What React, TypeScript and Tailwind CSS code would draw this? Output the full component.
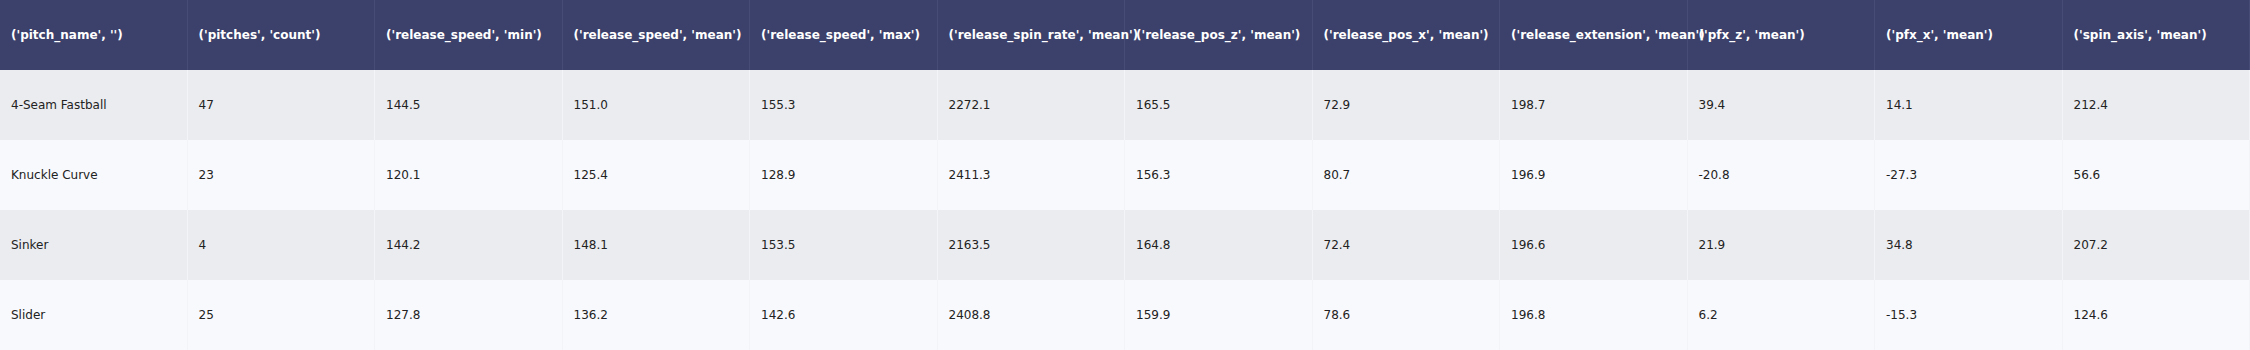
const headers = [
  "('pitch_name', '')",
  "('pitches', 'count')",
  "('release_speed', 'min')",
  "('release_speed', 'mean')",
  "('release_speed', 'max')",
  "('release_spin_rate', 'mean')",
  "('release_pos_z', 'mean')",
  "('release_pos_x', 'mean')",
  "('release_extension', 'mean')",
  "('pfx_z', 'mean')",
  "('pfx_x', 'mean')",
  "('spin_axis', 'mean')",
]

const rows = [
  ["4-Seam Fastball", "47", "144.5", "151.0", "155.3", "2272.1", "165.5", "72.9", "198.7", "39.4", "14.1", "212.4"],
  ["Knuckle Curve", "23", "120.1", "125.4", "128.9", "2411.3", "156.3", "80.7", "196.9", "-20.8", "-27.3", "56.6"],
  ["Sinker", "4", "144.2", "148.1", "153.5", "2163.5", "164.8", "72.4", "196.6", "21.9", "34.8", "207.2"],
  ["Slider", "25", "127.8", "136.2", "142.6", "2408.8", "159.9", "78.6", "196.8", "6.2", "-15.3", "124.6"],
]

export default function App() {
  return (
    <div className="w-[2250px] h-[350px] overflow-hidden bg-white font-['DejaVu_Sans',Verdana,sans-serif] text-[12px]">
      {/* header */}
      <div className="grid grid-cols-[repeat(12,187.5px)] h-[70px] bg-[#3c416b]">
        {headers.map((h) => (
          <div key={h} className="flex items-center pl-[11px] whitespace-nowrap border-r border-[#474c76] font-bold text-white">
            {h}
          </div>
        ))}
      </div>

      {/* body */}
      {rows.map((r, i) => (
        <div
          key={r[0]}
          className={
            i % 2 === 0
              ? "grid grid-cols-[repeat(12,187.5px)] h-[70px] bg-[#ebecef]"
              : "grid grid-cols-[repeat(12,187.5px)] h-[70px] bg-[#f8f9fc]"
          }
        >
          {r.map((v, j) => (
            <div key={j} className="flex items-center pl-[11px] whitespace-nowrap border-r border-[#f3f4f7] text-[#222222]">
              {v}
            </div>
          ))}
        </div>
      ))}
    </div>
  )
}
